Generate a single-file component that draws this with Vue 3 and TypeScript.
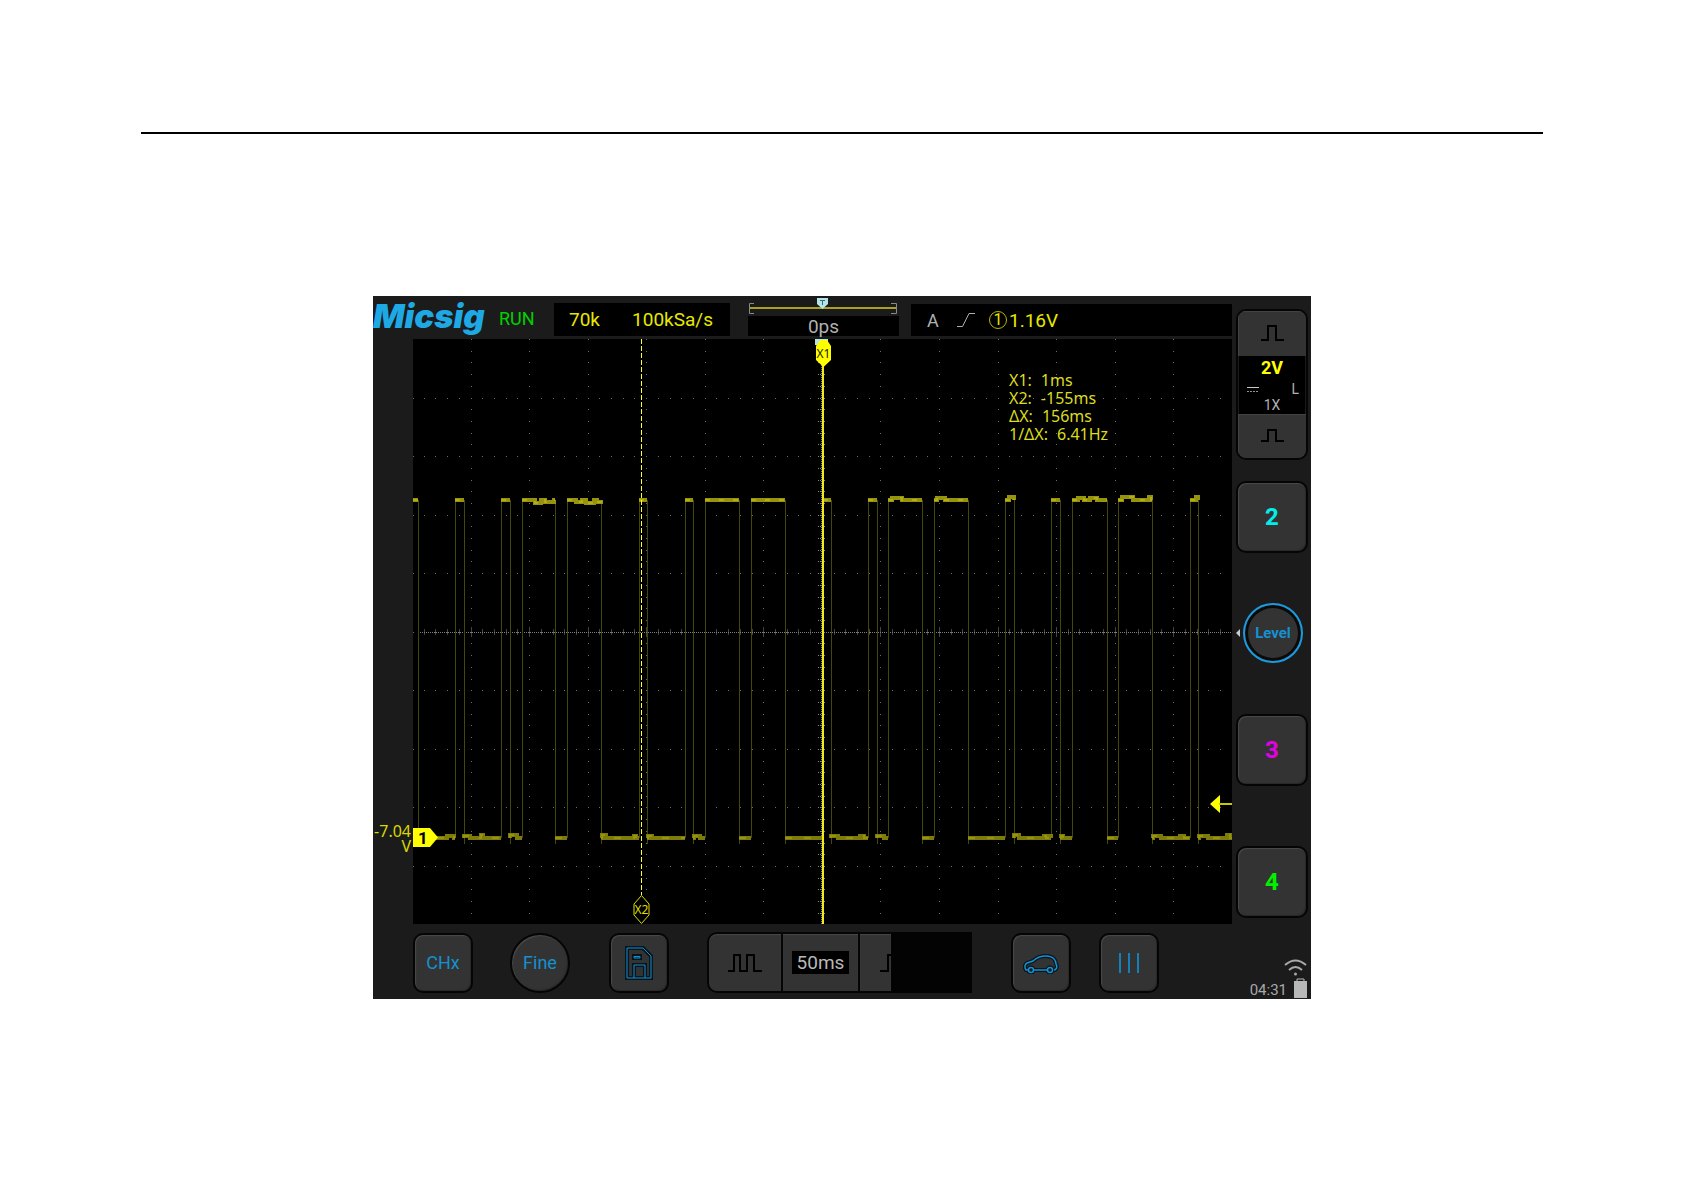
<script setup lang="ts">
type Span = [number, number]
type Bump = [number, number, number]

const DIV = 58.55
const HIGH = 161
const LOW = 499

const highs: Span[] = [
  [0, 5], [42, 51], [88, 97], [109, 142], [154, 188], [226, 234],
  [272, 280], [292, 326], [338, 372], [410, 418], [455, 464], [475, 509],
  [521, 555], [592, 601], [638, 647], [659, 694], [705, 739], [777, 785],
]
const lows: Span[] = highs.map(([, end], i) => [end, i + 1 < highs.length ? highs[i + 1][0] : 819])

const highBumps: Bump[] = [
  [122, 128, 3], [132, 141, 2], [163, 169, 2], [173, 181, 3], [184, 188, 2],
  [479, 489, -2], [524, 532, -2], [596, 601, -3], [665, 671, -2],
  [677, 684, -2], [709, 720, -3], [736, 738, -3], [783, 785, -3],
]
const lowBumps: Bump[] = [
  [34, 41, -2], [51, 57, -2], [68, 70, -3], [97, 104, -3], [189, 193, -3],
  [221, 223, -2], [235, 239, -2], [281, 287, -2], [418, 425, -2],
  [447, 451, -2], [464, 471, -2], [601, 606, -3], [631, 633, -2],
  [636, 638, -2], [648, 650, -2], [740, 748, -2], [767, 771, -2],
  [786, 795, -2], [814, 817, -3],
]

function levelPath(spans: Span[], y: number, bumps: Bump[]): string {
  return spans
    .map(([a, b]) => {
      const steps = bumps
        .filter(([s, e]) => s >= a && e <= b)
        .map(([s, e, d]) => `H${s}V${y + d}H${e}V${y}`)
        .join('')
      return `M${a} ${y}${steps}H${b}`
    })
    .join('')
}

const highPath = levelPath(highs, HIGH, highBumps)
const lowPath = levelPath(lows, LOW, lowBumps)
const edgePath = highs
  .map(([a, b]) => (a > 0 ? `M${a + 0.5} ${HIGH}V${LOW}` : '') + `M${b + 0.5} ${HIGH}V${LOW + 6}`)
  .join('')

const gridX = (i: number) => Math.max(0, Math.round((i * DIV) / 5) - 1)
const gridY = (i: number) => Math.round((i * DIV) / 5) + 0.5

let gridDots = ''
let axisTicks = ''
for (let row = 1; row < 10; row++) {
  for (let i = 0; i < 70; i++) gridDots += `M${gridX(i)} ${gridY(row * 5)}h1`
}
for (let col = 1; col < 14; col++) {
  for (let i = 0; i < 50; i++) gridDots += `M${gridX(col * 5)} ${gridY(i)}h1`
}
for (let i = 1; i < 70; i++) {
  const half = i % 5 === 0 ? 5 : 3
  axisTicks += `M${gridX(i) + 0.5} ${293.5 - half}v${half * 2}`
}
for (let i = 1; i < 50; i++) {
  axisTicks += `M405 ${gridY(i)}h7`
}

const cursors: [string, string][] = [
  ['X1:', '1ms'],
  ['X2:', '-155ms'],
  ['ΔX:', '156ms'],
  ['1/ΔX:', '6.41Hz'],
]
</script>

<template>
  <main class="page">
    <hr class="rule" />
    <section class="scope" aria-label="Oscilloscope">
      <div class="main">
        <header class="top">
          <span class="logo">Micsig</span>
          <span class="run">RUN</span>
          <div class="box rate"><span>70k</span><span>100kSa/s</span></div>
          <div class="position">
            <svg class="bracket" width="150" height="20" viewBox="0 0 150 20" aria-hidden="true">
              <path d="M6 7.500H1.500V17.500H6M143 7.500H148.500V17.500H143" fill="none" stroke="#8a8a8a" />
              <path d="M2 12H148" stroke="#aaa31c" stroke-width="2" />
              <path d="M69 2H80V8L74.500 13L69 8Z" fill="#b4e4ea" />
              <path d="M72 4.500H77M74.500 4.500V9" fill="none" stroke="#46666c" />
            </svg>
            <div class="box delay">0ps</div>
          </div>
          <div class="box trigger">
            <span class="mode">A</span>
            <svg width="18" height="16" viewBox="0 0 18 16" aria-hidden="true">
              <path d="M0 14.500H5.500L12 1.500H18" fill="none" stroke="#b0b0b0" />
            </svg>
            <span class="level"><span class="ring">1</span>1.16V</span>
          </div>
        </header>

        <div class="middle">
          <div class="gutter">
            <div class="offset">-7.04<br />V</div>
          </div>
          <div class="plot">
            <svg class="graph" viewBox="0 0 819 585" role="img" aria-label="Channel 1 waveform">
              <path :d="gridDots" stroke="#6c6c6c" fill="none" />
              <path :d="axisTicks" stroke="#858585" stroke-dasharray="1 1" fill="none" />
              <path d="M5 293.500H819M408.500 0V585" stroke="#7d7d7d" stroke-dasharray="1 1" fill="none" />
              <path :d="edgePath" stroke="#45450e" fill="none" />
              <path :d="highPath" stroke="#96940f" stroke-width="4" fill="none" />
              <path :d="highPath" stroke="#b3ae14" stroke-dasharray="5 9" stroke-width="2" fill="none" />
              <path :d="lowPath" stroke="#7d7b0a" stroke-width="4" fill="none" />
              <path :d="lowPath" stroke="#989410" stroke-dasharray="7 12" stroke-width="2" fill="none" />

              <path d="M228.500 0V556" stroke="#ffff28" stroke-dasharray="5 2" />
              <path d="M228.500 556.500L236 565V576L228.500 584.500L221 576V565Z" fill="#000" stroke="#dede00" />
              <text x="228.500" y="575" class="tag outline">X2</text>

              <path d="M402 0H415V6H402Z" fill="#b4e4ea" />
              <path d="M410 26V585" stroke="#efe91e" stroke-width="2" />
              <path d="M407 1H414L418 7V21L410.500 28L403 21V7Z" fill="#ff0" />
              <text x="410.500" y="19" class="tag solid">X1</text>

              <path d="M0 489H17L25 498.500L17 508H0Z" fill="#ff0" />
              <text x="10" y="505" class="channel-mark">1</text>

              <path d="M797 465L807 456V474Z" fill="#ff0" />
              <path d="M806 465H819" stroke="#c8c800" stroke-width="2" />
            </svg>
            <dl class="readout">
              <div v-for="[name, value] in cursors" :key="name">
                <dt>{{ name }}</dt><dd>{{ value }}</dd>
              </div>
            </dl>
          </div>
        </div>

        <footer class="tools">
          <button class="key square" type="button">CHx</button>
          <button class="key round" type="button">Fine</button>
          <button class="key square" type="button" aria-label="Save">
            <svg width="28" height="34" viewBox="0 0 28 34" fill="none" aria-hidden="true">
              <path d="M2 2H18L26 10V32H2ZM9 32V19H20V32M9 10H15V12H9Z" stroke="#07141c" stroke-width="4" />
              <path d="M2 2H18L26 10V32H2ZM9 32V19H20V32M9 10.500H15V12H9Z" stroke="#1590d0" stroke-width="1" />
            </svg>
          </button>
          <div class="timebase">
            <button class="part" type="button" aria-label="Slower">
              <svg width="34" height="20" viewBox="0 0 34 20" aria-hidden="true">
                <path d="M0 18H6V2H12V18H19V2H26V18H34" fill="none" stroke="#000" stroke-width="2" />
              </svg>
            </button>
            <button class="part center" type="button"><span>50ms</span></button>
            <button class="part clipped" type="button" aria-label="Faster">
              <svg width="11" height="20" viewBox="0 0 11 20" aria-hidden="true">
                <path d="M0 18H8V2H12" fill="none" stroke="#000" stroke-width="2" />
              </svg>
            </button>
            <div class="cover"></div>
          </div>
          <button class="key square" type="button" aria-label="Automotive">
            <svg width="36" height="22" viewBox="0 0 36 22" fill="none" aria-hidden="true">
              <g stroke="#07141c" stroke-width="4">
                <path d="M5 18H3C1 15 2 12 4 11L10 9C14 5 17 4 23 4C30 4 33 8 33 12C35 15 33 18 31 18M11 18H24" />
                <circle cx="8" cy="18" r="2.500" /><circle cx="27" cy="18" r="2.500" />
              </g>
              <g stroke="#1590d0" stroke-width="1.500">
                <path d="M5 18H3C1 15 2 12 4 11L10 9C14 5 17 4 23 4C30 4 33 8 33 12C35 15 33 18 31 18M11 18H24" />
                <circle cx="8" cy="18" r="2.500" /><circle cx="27" cy="18" r="2.500" />
              </g>
            </svg>
          </button>
          <button class="key square" type="button" aria-label="Cursors">
            <svg width="20" height="20" viewBox="0 0 20 20" aria-hidden="true">
              <path d="M1 0V20M10 0V20M19 0V20" stroke="#1580b8" stroke-width="2" />
            </svg>
          </button>
        </footer>
      </div>

      <aside class="side">
        <div class="channel-one">
          <button class="step" type="button" aria-label="Increase scale">
            <svg width="23" height="17" viewBox="0 0 23 17" aria-hidden="true">
              <path d="M0 16V15H7V1H15V15H23V16" fill="none" stroke="#000" stroke-width="2" />
            </svg>
          </button>
          <div class="scale">
            <strong>2V</strong>
            <div class="coupling">
              <svg width="12" height="6" viewBox="0 0 12 6" aria-hidden="true">
                <path d="M0 1.500H12" stroke="#c8c8c8" />
                <path d="M0 5.500H12" stroke="#909090" stroke-dasharray="2 1" />
              </svg>
              <span>L</span>
            </div>
            <span class="probe">1X</span>
          </div>
          <button class="step" type="button" aria-label="Decrease scale">
            <svg width="23" height="13" viewBox="0 0 23 13" aria-hidden="true">
              <path d="M0 13V12H7V1H15V12H23V13" fill="none" stroke="#000" stroke-width="2" />
            </svg>
          </button>
        </div>
        <button class="key channel two" type="button">2</button>
        <div class="level-row">
          <svg width="4" height="8" viewBox="0 0 4 8" aria-hidden="true"><path d="M0 4L4 0V8Z" fill="#ccc" /></svg>
          <button class="level-knob" type="button">Level</button>
        </div>
        <button class="key channel three" type="button">3</button>
        <button class="key channel four" type="button">4</button>
        <div class="status">
          <svg class="wifi" width="23" height="17" viewBox="0 0 23 17" fill="none" stroke="#a8a8a8" stroke-width="2" aria-hidden="true">
            <path d="M1 6Q11.500 -3 22 6M5 11Q11.500 5 18 11" />
            <circle cx="11.500" cy="15" r="1.500" fill="#a8a8a8" stroke="none" />
          </svg>
          <div class="clock">
            <time>04:31</time>
            <svg width="13" height="20" viewBox="0 0 13 20" aria-hidden="true">
              <path d="M3 3V1H10V3" fill="none" stroke="#b8b8b8" stroke-width="1" />
              <path d="M0 3H13V20H0Z" fill="#b8b8b8" />
            </svg>
          </div>
        </div>
      </aside>
    </section>
  </main>
</template>

<style>
body {
  background: #fff;
}
</style>

<style scoped>
.page {
  padding: 132px 141px;
  font-family: Roboto, "Liberation Sans", sans-serif;
}
.rule {
  height: 2px;
  margin: 0 0 162px;
  border: 0;
  background: #000;
}
.scope {
  display: flex;
  width: 100%;
  max-width: 938px;
  margin: 0 auto;
  background: #1b1b1b;
}
.main {
  flex: 1;
  min-width: 0;
}
.top {
  display: flex;
  align-items: flex-end;
  height: 40px;
  padding-bottom: 3px;
  white-space: nowrap;
}
.logo {
  width: 126px;
  font: italic 900 33px/40px Inter, "Liberation Sans", sans-serif;
  color: #1fa9e4;
}
.run {
  width: 55px;
  font-size: 18px;
  line-height: 34px;
  color: #00d200;
}
.box {
  box-sizing: border-box;
  background: #000;
}
.rate {
  display: flex;
  justify-content: space-between;
  width: 176px;
  padding: 0 17px 0 15px;
  font-size: 19px;
  line-height: 33px;
  color: #e8e800;
}
.position {
  width: 151px;
  margin: 0 12px 0 18px;
}
.bracket {
  display: block;
}
.delay {
  height: 20px;
  font-size: 19px;
  line-height: 22px;
  text-align: center;
  color: #b0b0b0;
}
.trigger {
  display: flex;
  flex: 1;
  align-items: center;
  height: 32px;
  padding-left: 16px;
  color: #b0b0b0;
}
.mode {
  width: 30px;
  font-size: 18px;
}
.level {
  display: flex;
  align-items: center;
  margin-left: 14px;
  font-size: 19px;
  color: #e8e800;
}
.ring {
  box-sizing: border-box;
  width: 18px;
  height: 18px;
  margin-right: 2px;
  border: 1px solid #b8b800;
  border-radius: 50%;
  font-size: 16px;
  line-height: 16px;
  text-align: center;
}
.middle {
  display: flex;
}
.gutter {
  display: flex;
  flex-direction: column;
  justify-content: flex-end;
  width: 40px;
  padding-bottom: 70px;
  box-sizing: border-box;
}
.offset {
  padding-right: 2px;
  font: 16px/15px "Noto Sans", sans-serif;
  text-align: right;
  color: #d8d800;
}
.plot {
  position: relative;
  flex: 1;
  min-width: 0;
  background: #000;
}
.graph {
  display: block;
  width: 100%;
  height: auto;
}
.tag {
  font: 12px "Noto Sans", sans-serif;
  text-anchor: middle;
}
.outline {
  fill: #dede00;
}
.solid {
  fill: #222200;
}
.channel-mark {
  font: 700 17px Roboto, sans-serif;
  text-anchor: middle;
  fill: #000;
}
.readout {
  position: absolute;
  top: 32px;
  left: 596px;
  margin: 0;
  font: 16px/18px "Noto Sans", sans-serif;
  color: #dcdc1c;
}
.readout div {
  display: flex;
  gap: 9px;
}
.readout dd {
  margin: 0;
}
.tools {
  display: flex;
  align-items: center;
  height: 61px;
  padding: 8px 73px 6px 40px;
}
.key,
.part,
.step,
.level-knob {
  display: flex;
  align-items: center;
  justify-content: center;
  box-sizing: border-box;
  padding: 0;
  border: 0;
  background: #333;
  font-family: inherit;
  color: #1590d0;
}
.key {
  border: 2px solid #050505;
  border-radius: 10px;
  box-shadow: inset 1px 1px 1px #4a4a4a, inset -1px -1px 1px #292929;
  font-size: 18px;
}
.square,
.round {
  width: 60px;
  height: 60px;
}
.round {
  margin: 0 39px 0 37px;
  border-radius: 50%;
}
.timebase {
  display: flex;
  width: 265px;
  height: 61px;
  margin: 0 39px 0 38px;
}
.part {
  border: 2px solid #050505;
  border-right-width: 1px;
  box-shadow: inset 0 1px 1px #464646;
  width: 75px;
}
.part:first-child {
  border-radius: 10px 0 0 10px;
}
.part.center {
  border-left-width: 1px;
  width: 77px;
}
.center span {
  padding: 0 5px;
  background: #000;
  font-size: 19px;
  line-height: 23px;
  color: #b8b8b8;
}
.part.clipped {
  justify-content: flex-end;
  border-right: 0;
  border-left-width: 1px;
  width: 32px;
}
.cover {
  flex: 1;
  background: #030303;
}
.tools .square:nth-last-child(2) {
  margin-right: auto;
}
.side {
  display: flex;
  flex-direction: column;
  box-sizing: border-box;
  width: 79px;
  padding: 13px 2px 0 4px;
}
.channel-one {
  display: flex;
  flex-direction: column;
  box-sizing: border-box;
  width: 72px;
  height: 151px;
  margin-bottom: 21px;
  border: 2px solid #050505;
  border-radius: 10px;
  overflow: hidden;
}
.step {
  flex: 1;
  box-shadow: inset 1px 1px 1px #444;
}
.scale {
  display: flex;
  flex-direction: column;
  align-items: center;
  height: 58px;
  margin: 0 1px;
  background: #000;
  font-size: 14px;
  color: #b0b0b0;
}
.scale strong {
  font-size: 18px;
  line-height: 24px;
  color: #ff0;
}
.coupling {
  display: flex;
  align-items: center;
  justify-content: space-between;
  align-self: stretch;
  padding: 0 6px 0 8px;
  line-height: 18px;
}
.probe {
  line-height: 14px;
}
.channel {
  flex: none;
  width: 72px;
  height: 72px;
  font-size: 24px;
  font-weight: 700;
}
.two {
  color: #0ee;
}
.three {
  color: #e400e4;
}
.four {
  margin-top: 60px;
  color: #00f000;
}
.level-row {
  display: flex;
  align-items: center;
  gap: 3px;
  margin: 50px 0 51px;
}
.level-knob {
  width: 60px;
  height: 60px;
  border: 2px solid #1a9be0;
  border-radius: 50%;
  box-shadow: inset 0 0 0 3px #0a0a0a;
  font-size: 15px;
  font-weight: 700;
}
.status {
  display: flex;
  flex-direction: column;
  align-items: flex-end;
  margin-top: auto;
  padding: 0 2px 1px 0;
}
.wifi {
  margin-bottom: 2px;
}
.clock {
  display: flex;
  align-items: flex-end;
  gap: 7px;
  font-size: 15px;
  line-height: 16px;
  color: #a8a8a8;
}
</style>
